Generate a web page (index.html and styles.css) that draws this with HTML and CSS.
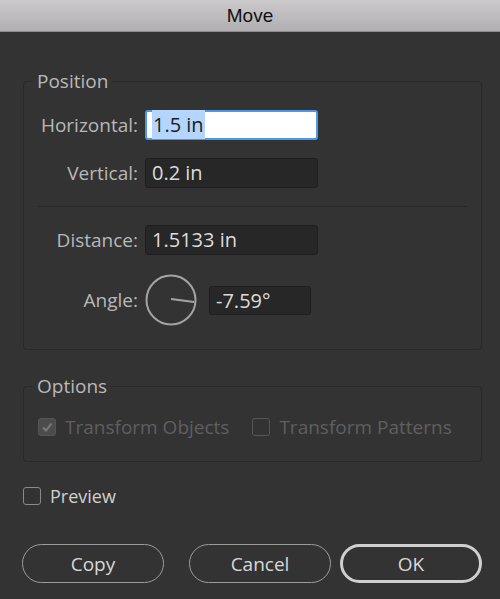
FILE: index.html
```html
<!DOCTYPE html>
<html lang="en">
<head>
    <meta charset="UTF-8">
    <meta name="viewport" content="width=device-width, initial-scale=1.0">
    <title>Move</title>
    <link rel="stylesheet" href="styles.css">
</head>
<body>
    <div class="titlebar">Move</div>
    <div class="dialog">
        <fieldset class="group position">
            <legend>Position</legend>
            <div class="row">
                <label class="label">Horizontal:</label>
                <div class="field focused"><span class="selected">1.5 in</span></div>
            </div>
            <div class="row">
                <label class="label">Vertical:</label>
                <div class="field">0.2 in</div>
            </div>
            <div class="divider"></div>
            <div class="row">
                <label class="label">Distance:</label>
                <div class="field">1.5133 in</div>
            </div>
            <div class="row angle-row">
                <label class="label">Angle:</label>
                <!-- angle dial, needle at -7.59 degrees -->
                <svg class="dial" width="52" height="52" viewBox="0 0 52 52">
                    <circle cx="26" cy="26" r="24.5" fill="none" stroke="#a4a4a4" stroke-width="2"/>
                    <line x1="26" y1="25" x2="49" y2="28" stroke="#a4a4a4" stroke-width="2"/>
                </svg>
                <div class="field short">-7.59°</div>
            </div>
        </fieldset>

        <fieldset class="group options">
            <legend>Options</legend>
            <div class="checks">
                <span class="check disabled">
                    <span class="box checked">
                        <svg width="12" height="12" viewBox="0 0 12 12"><path d="M2 6.5 L5 9.5 L10.5 2.5" fill="none" stroke="#7c7c7c" stroke-width="2"/></svg>
                    </span>
                    Transform Objects
                </span>
                <span class="check disabled">
                    <span class="box"></span>
                    Transform Patterns
                </span>
            </div>
        </fieldset>

        <div class="preview">
            <span class="check">
                <span class="box"></span>
                Preview
            </span>
        </div>

        <div class="buttons">
            <button class="btn copy">Copy</button>
            <button class="btn cancel">Cancel</button>
            <button class="btn default">OK</button>
        </div>
    </div>
</body>
</html>
```

FILE: styles.css
```css
body {
    margin: 0;
    background: #333333;
    font-family: "Open Sans", "Noto Sans", sans-serif;
    color: #b8b8b8;
    width: 500px;
    height: 599px;
    overflow: hidden;
}
.titlebar {
    height: 31px;
    line-height: 31px;
    text-align: center;
    font-family: "Liberation Sans", Arial, sans-serif;
    font-size: 19px;
    color: #111111;
    background: linear-gradient(#cbc9cb, #b1afb1);
    border-bottom: 1px solid #8d8c8d;
}
.dialog {
    padding: 39px 18px 0 23px;
}
.group {
    margin: 0;
    border: 1px solid #292929;
    border-radius: 4px;
    padding: 0 14px;
}
.group legend {
    font-size: 19px;
    line-height: 20px;
    padding: 0 4px;
    margin-left: -5px;
    color: #b9b9b9;
}
.position {
    padding-top: 19px;
    padding-bottom: 23px;
}
.row {
    display: flex;
    align-items: center;
    margin-bottom: 18px;
}
.row.angle-row {
    margin-top: 19px;
    margin-bottom: 0;
}
.label {
    width: 100px;
    text-align: right;
    font-size: 19px;
    white-space: nowrap;
    margin-right: 7px;
}
.field {
    box-sizing: border-box;
    width: 173px;
    height: 30px;
    line-height: 28px;
    padding-left: 6px;
    background: #272727;
    border: 1px solid #1f1f1f;
    border-radius: 3px;
    font-size: 20px;
    color: #dcdcdc;
}
.field.focused {
    background: #ffffff;
    border: 2px solid #4c97e6;
    line-height: 26px;
    padding-left: 5px;
    color: #1c1c1c;
}
.selected {
    background: #b4d6fe;
    padding: 1px 1px;
}
.field.short {
    width: 102px;
    height: 29px;
    line-height: 27px;
    margin-left: 12px;
}
.dial {
    display: block;
}
.divider {
    height: 1px;
    background: #292929;
    margin-bottom: 18px;
}
.options {
    margin-top: 26px;
    padding-top: 19px;
    padding-bottom: 22px;
}
.checks {
    display: flex;
    gap: 23px;
}
.check {
    display: flex;
    align-items: center;
    height: 24px;
    line-height: 24px;
    font-size: 19px;
    color: #d0d0d0;
}
.check.disabled {
    color: #5f5f5f;
}
.box {
    box-sizing: border-box;
    width: 18px;
    height: 18px;
    border: 1px solid #8a8a8a;
    border-radius: 3px;
    margin-right: 9px;
    display: flex;
    align-items: center;
    justify-content: center;
}
.disabled .box {
    border-color: #575757;
}
.box.checked {
    background: #4c4c4c;
    border-color: #555555;
}
.preview {
    margin-top: 22px;
}
.preview .check {
    font-size: 18px;
}
.buttons {
    display: flex;
    margin-top: 36px;
}
.btn {
    box-sizing: border-box;
    width: 142px;
    height: 39px;
    border-radius: 20px;
    background: transparent;
    border: 1.5px solid #9c9c9c;
    font-family: "Open Sans", "Noto Sans", sans-serif;
    font-size: 19px;
    color: #d8d8d8;
    padding: 0;
}
.btn.copy {
    margin-left: -1px;
}
.btn.cancel {
    margin-left: 25px;
}
.btn.default {
    margin-left: 9px;
    border: 3px solid #cfcfcf;
}
```
